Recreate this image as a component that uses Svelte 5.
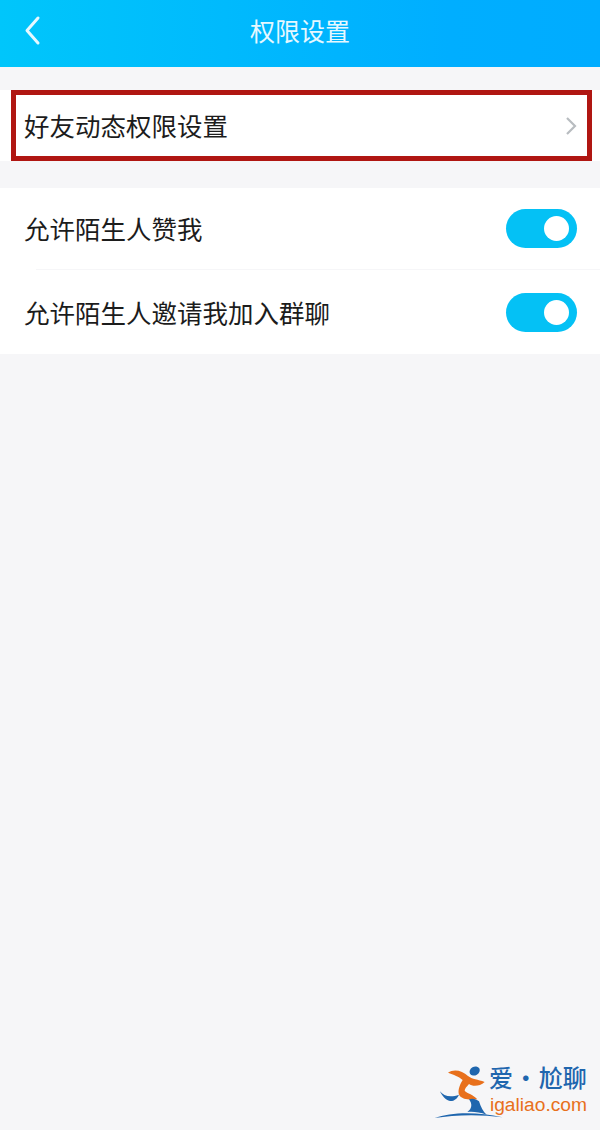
<script>
  let toggles = $state([
    { label: '允许陌生人赞我', on: true },
    { label: '允许陌生人邀请我加入群聊', on: true }
  ]);
</script>

<div class="page">
  <header class="top-bar">
    <svg class="back" width="20" height="32" viewBox="0 0 20 32" fill="none">
      <path d="M16 3 L5 15.5 L16 28" stroke="#e6f8ff" stroke-width="3" stroke-linecap="round" stroke-linejoin="round" />
    </svg>
    <span class="title">权限设置</span>
  </header>

  <section class="group first">
    <div class="row entry">
      <span class="label">好友动态权限设置</span>
      <svg width="12" height="20" viewBox="0 0 12 20" fill="none">
        <path d="M2 2 L10 10 L2 18" stroke="#b8bcc0" stroke-width="2.2" />
      </svg>
    </div>
    <div class="marker"></div>
  </section>

  <section class="group">
    {#each toggles as item, i}
      <div class="row switch-row" class:divided={i > 0}>
        <span class="label">{item.label}</span>
        <button class="toggle" aria-label={item.label} onclick={() => (item.on = !item.on)}>
          <span class="knob"></span>
        </button>
      </div>
    {/each}
  </section>

  <div class="watermark">
    <svg width="70" height="60" viewBox="0 0 210 180">
      <ellipse cx="122" cy="27" rx="16" ry="13" fill="#1f66ae" transform="rotate(-30 122 27)" />
      <path d="M42 32 C60 20 85 26 102 42 C114 52 132 52 152 60 C137 74 115 74 105 66 C98 74 92 80 92 87 C100 94 118 98 130 112 C108 114 85 114 76 100 C70 88 76 70 86 54 C76 44 58 38 42 32 Z" fill="#e8701c" />
      <path d="M18 88 C28 102 50 108 75 98 C70 110 60 118 48 117 C35 114 24 102 18 88 Z" fill="#1f66ae" />
      <path d="M105 112 C118 108 126 112 135 118 C140 135 148 150 158 158 C135 150 115 148 100 150 C115 140 115 125 105 112 Z" fill="#1f66ae" />
      <path d="M2 168 C50 150 130 148 205 166 C140 156 60 158 2 168 Z" fill="#1f66ae" />
    </svg>
    <div class="wm-text">
      <span class="wm-cn">爱 · 尬聊</span>
      <span class="wm-en">igaliao.com</span>
    </div>
  </div>
</div>

<style>
  :global(body) {
    margin: 0;
    background: #f6f6f8;
  }

  .page {
    position: relative;
    height: 1130px;
    overflow: hidden;
    background: #f6f6f8;
    color: #1c1c1c;
    font-family: "Noto Sans CJK SC", "Liberation Sans", sans-serif;
  }

  .top-bar {
    height: 67px;
    display: flex;
    align-items: center;
    justify-content: center;
    position: relative;
    background: linear-gradient(90deg, #00c6fb 0%, #00aeff 75%, #00acff 100%);
  }

  .back {
    position: absolute;
    left: 22px;
    top: 15px;
  }

  .title {
    color: #e6f8ff;
    font-size: 25px;
    line-height: 1;
    margin-top: -6px;
  }

  .group {
    background: #fff;
    margin-top: 27px;
    position: relative;
  }

  .group.first {
    margin-top: 23px;
    height: 71px;
  }

  .row {
    display: flex;
    align-items: center;
    justify-content: space-between;
    font-size: 25.5px;
    padding: 0 23px 0 24px;
    box-sizing: border-box;
  }

  .label {
    margin-bottom: 3px;
  }

  .switch-row .label {
    margin-bottom: 1px;
  }

  .entry {
    height: 71px;
  }

  .switch-row {
    height: 82px;
    padding-bottom: 2px;
  }

  .switch-row.divided {
    position: relative;
    height: 84px;
    padding-bottom: 0;
  }

  .switch-row.divided::before {
    content: '';
    position: absolute;
    top: -1px;
    left: 36px;
    right: 0;
    height: 1px;
    background: #f6f6f8;
  }

  .marker {
    position: absolute;
    inset: 0 8px 0 11px;
    border: 5px solid #b01612;
    box-sizing: border-box;
    pointer-events: none;
  }

  .toggle {
    width: 71px;
    height: 39px;
    padding: 0 8px 0 0;
    border: none;
    border-radius: 20px;
    background: #04c1f5;
    display: flex;
    align-items: center;
    justify-content: flex-end;
    box-sizing: border-box;
    flex: none;
  }

  .knob {
    width: 25px;
    height: 25px;
    border-radius: 50%;
    background: #fff;
  }

  .watermark {
    position: absolute;
    right: 13px;
    bottom: 8px;
    display: flex;
    align-items: flex-start;
  }

  .wm-text {
    display: flex;
    flex-direction: column;
    margin: -3px 0 0 -15px;
  }

  .wm-cn {
    color: #1f66ae;
    font-size: 24px;
    line-height: 35px;
    font-weight: 500;
    word-spacing: -4.5px;
    white-space: nowrap;
  }

  .wm-en {
    color: #e8701c;
    font-family: "Liberation Sans", sans-serif;
    font-size: 19.2px;
    line-height: 22px;
    padding-left: 1px;
    white-space: nowrap;
  }
</style>
